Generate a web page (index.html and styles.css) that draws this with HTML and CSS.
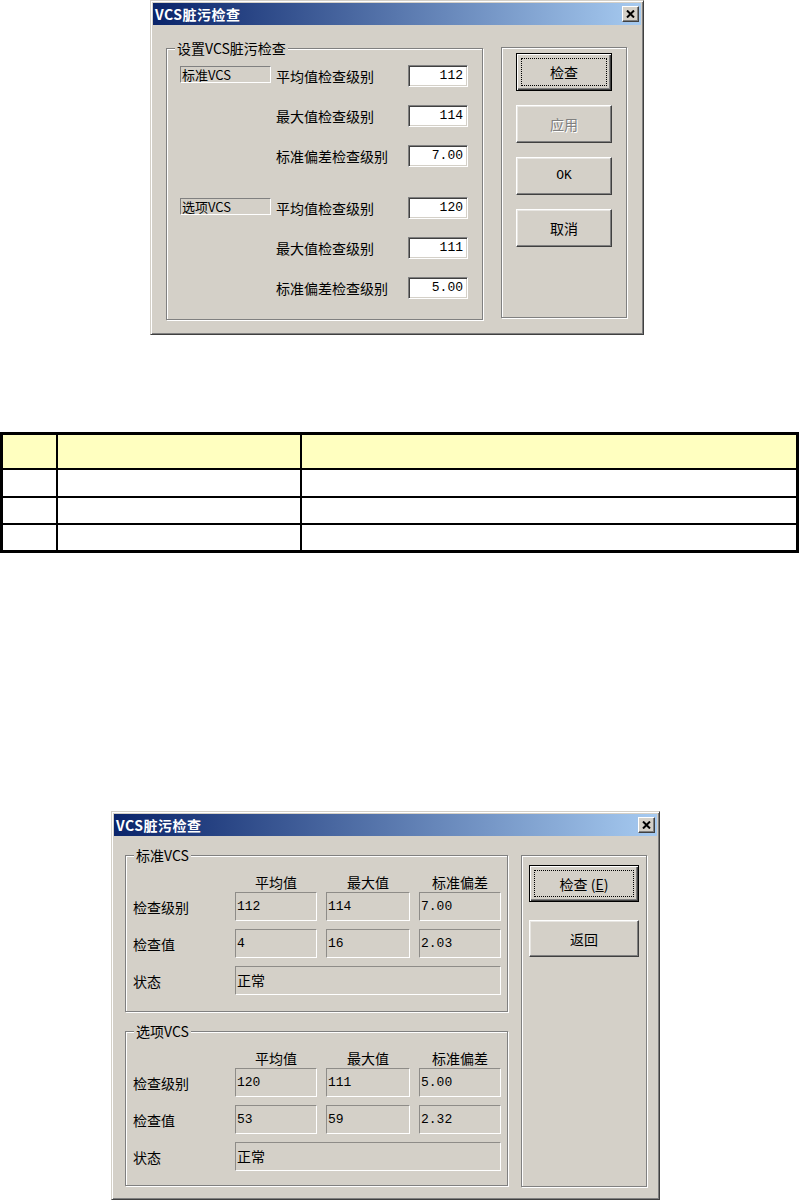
FILE: index.html
```html
<!DOCTYPE html>
<html lang="zh-CN">
<head>
<meta charset="utf-8">
<title>VCS脏污检查</title>
<link rel="stylesheet" href="styles.css">
</head>
<body>
<div class="page">

  <div class="dialog dlg-settings">
    <div class="titlebar">
      <span class="title">VCS脏污检查</span>
      <span class="close"><svg width="9" height="8" viewBox="0 0 9 8"><path d="M1 0.5 L8 7.5 M8 0.5 L1 7.5" stroke="#000" stroke-width="2" fill="none"/></svg></span>
    </div>
    <div class="settings-body">
      <div class="group set-group">
        <span class="legend">设置VCS脏污检查</span>
        <div class="set-section">
          <div class="static">标准VCS</div><div class="lbl">平均值检查级别</div><div class="edit num">112</div>
          <div></div><div class="lbl">最大值检查级别</div><div class="edit num">114</div>
          <div></div><div class="lbl">标准偏差检查级别</div><div class="edit num">7.00</div>
        </div>
        <div class="set-section second">
          <div class="static">选项VCS</div><div class="lbl">平均值检查级别</div><div class="edit num">120</div>
          <div></div><div class="lbl">最大值检查级别</div><div class="edit num">111</div>
          <div></div><div class="lbl">标准偏差检查级别</div><div class="edit num">5.00</div>
        </div>
      </div>
      <div class="group panel set-panel">
        <div class="btn default set-btn"><div class="focus">检查</div></div>
        <div class="btn set-btn disabled">应用</div>
        <div class="btn set-btn"><span class="num">OK</span></div>
        <div class="btn set-btn">取消</div>
      </div>
    </div>
  </div>

  <div class="grid-table">
    <div class="hd"></div><div class="hd"></div><div class="hd"></div>
    <div class="cell"></div><div class="cell"></div><div class="cell"></div>
    <div class="cell"></div><div class="cell"></div><div class="cell"></div>
    <div class="cell"></div><div class="cell"></div><div class="cell"></div>
  </div>

  <div class="dialog dlg-result">
    <div class="titlebar">
      <span class="title">VCS脏污检查</span>
      <span class="close"><svg width="9" height="8" viewBox="0 0 9 8"><path d="M1 0.5 L8 7.5 M8 0.5 L1 7.5" stroke="#000" stroke-width="2" fill="none"/></svg></span>
    </div>
    <div class="result-body">
      <div class="res-col">
        <div class="group res-group g1">
          <span class="legend">标准VCS</span>
          <div class="res-head"><div></div><div>平均值</div><div>最大值</div><div>标准偏差</div></div>
          <div class="res-grid">
            <div class="lbl">检查级别</div><div class="ro num">112</div><div class="ro num">114</div><div class="ro num">7.00</div>
            <div class="lbl">检查值</div><div class="ro num">4</div><div class="ro num">16</div><div class="ro num">2.03</div>
            <div class="lbl">状态</div><div class="ro wide">正常</div>
          </div>
        </div>
        <div class="group res-group g2">
          <span class="legend">选项VCS</span>
          <div class="res-head"><div></div><div>平均值</div><div>最大值</div><div>标准偏差</div></div>
          <div class="res-grid">
            <div class="lbl">检查级别</div><div class="ro num">120</div><div class="ro num">111</div><div class="ro num">5.00</div>
            <div class="lbl">检查值</div><div class="ro num">53</div><div class="ro num">59</div><div class="ro num">2.32</div>
            <div class="lbl">状态</div><div class="ro wide">正常</div>
          </div>
        </div>
      </div>
      <div class="group panel res-panel">
        <div class="btn default res-btn"><div class="focus">检查 (<u>E</u>)</div></div>
        <div class="btn res-btn">返回</div>
      </div>
    </div>
  </div>

</div>
</body>
</html>
```

FILE: styles.css
```css
* { box-sizing: border-box; }
html, body { margin: 0; padding: 0; background: #fff; }
body {
  font-family: "Noto Sans CJK SC", "Liberation Sans", sans-serif;
  font-size: 14px;
  color: #000;
}
.page { width: 799px; display: flex; flex-direction: column; align-items: flex-start; }

.num { font-family: "Liberation Mono", "DejaVu Sans Mono", monospace; font-size: 13px; }

/* window frame */
.dialog {
  background: #d4d0c8;
  border: 1px solid;
  border-color: #d4d0c8 #404040 #404040 #d4d0c8;
  box-shadow: inset 1px 1px 0 #fff, inset -1px -1px 0 #808080;
  padding: 2px;
}
.dlg-settings { margin-left: 150px; width: 494px; height: 335px; }
.dlg-result { margin-left: 111px; margin-top: 258px; width: 549px; height: 389px; }

.titlebar {
  height: 22px;
  display: flex;
  align-items: center;
  justify-content: space-between;
  padding: 0 2px 0 2px;
  background: linear-gradient(to right, #0a246a, #a6caf0);
}
.title { color: #fff; font-weight: bold; font-size: 14px; line-height: 22px; letter-spacing: 0.5px; }
.close {
  width: 17px; height: 16px;
  display: flex; align-items: center; justify-content: center;
  background: #d4d0c8;
  border: 1px solid;
  border-color: #fff #404040 #404040 #fff;
  box-shadow: inset -1px -1px 0 #808080;
}

/* etched group box */
.group {
  position: relative;
  border: 1px solid #808080;
  box-shadow: inset 1px 1px 0 #fff, 1px 1px 0 #fff;
}
.legend {
  position: absolute;
  top: -11px; left: 8px;
  padding: 0 2px;
  background: #d4d0c8;
  line-height: 20px;
}

/* settings dialog */
.settings-body { display: flex; align-items: flex-start; padding: 23px 0 0 13px; }
.set-group { width: 317px; height: 272px; padding: 16px 14px 0 13px; }
.set-section {
  display: grid;
  grid-template-columns: 91px 1fr 60px;
  grid-auto-rows: 22px;
  column-gap: 5px;
  row-gap: 18px;
}
.set-section.second { margin-top: 30px; }
.static {
  align-self: start;
  margin-top: 1px;
  height: 17px;
  border: 1px solid;
  border-color: #808080 #fff #fff #808080;
  padding-left: 1px;
  font-size: 13px;
  line-height: 15px;
  white-space: nowrap;
}
.lbl { align-self: center; line-height: 20px; white-space: nowrap; }
.edit {
  background: #fff;
  border: 1px solid;
  border-color: #808080 #fff #fff #808080;
  box-shadow: inset 1px 1px 0 #404040, inset -1px -1px 0 #d4d0c8;
  text-align: right;
  padding-right: 4px;
  line-height: 20px;
}

.panel { display: flex; flex-direction: column; }
.set-panel { margin-left: 18px; margin-top: -1px; width: 126px; height: 271px; padding: 5px 0 0 14px; gap: 14px; }

.btn {
  display: flex; align-items: center; justify-content: center;
  background: #d4d0c8;
  border: 1px solid;
  border-color: #fff #404040 #404040 #fff;
  box-shadow: inset -1px -1px 0 #808080, inset 1px 1px 0 #e8e6e2;
  line-height: 20px;
}
.btn.default {
  border: 1px solid #000;
  box-shadow: inset 1px 1px 0 #fff, inset -1px -1px 0 #404040, inset -2px -2px 0 #808080;
  padding: 4px;
  align-items: stretch;
}
.focus {
  flex: 1;
  display: flex; align-items: center; justify-content: center;
  border: 1px dotted #000;
}
.btn.disabled { color: #808080; text-shadow: 1px 1px 0 #fff; }
.set-btn { width: 96px; height: 38px; }

/* table */
.grid-table {
  margin-top: 97px;
  width: 799px;
  display: grid;
  grid-template-columns: 53px 242px 1fr;
  grid-template-rows: 33px 26px 25px 25px;
  gap: 2px;
  background: #000;
  border: 3px solid #000;
}
.hd { background: #ffffc0; }
.cell { background: #fff; }

/* result dialog */
.result-body { display: flex; align-items: flex-start; padding: 19px 0 0 11px; }
.res-col { display: flex; flex-direction: column; gap: 19px; }
.res-group { width: 383px; padding: 16px 0 0 7px; }
.g1 { height: 157px; }
.g2 { height: 155px; }
.res-head, .res-grid {
  display: grid;
  grid-template-columns: 93px 82px 84px 82px;
  column-gap: 9px;
}
.res-head { height: 20px; line-height: 20px; text-align: center; }
.res-grid { grid-template-rows: 29px 29px 29px; row-gap: 8px; }
.ro {
  border: 1px solid;
  border-color: #8e8c88 #fff #fff #8e8c88;
  padding-left: 1px;
  line-height: 27px;
  white-space: nowrap;
}
.ro.wide { grid-column: 2 / 5; }
.res-panel { margin-left: 13px; width: 126px; height: 332px; padding: 9px 0 0 7px; gap: 18px; }
.res-btn { width: 110px; height: 37px; }
```
